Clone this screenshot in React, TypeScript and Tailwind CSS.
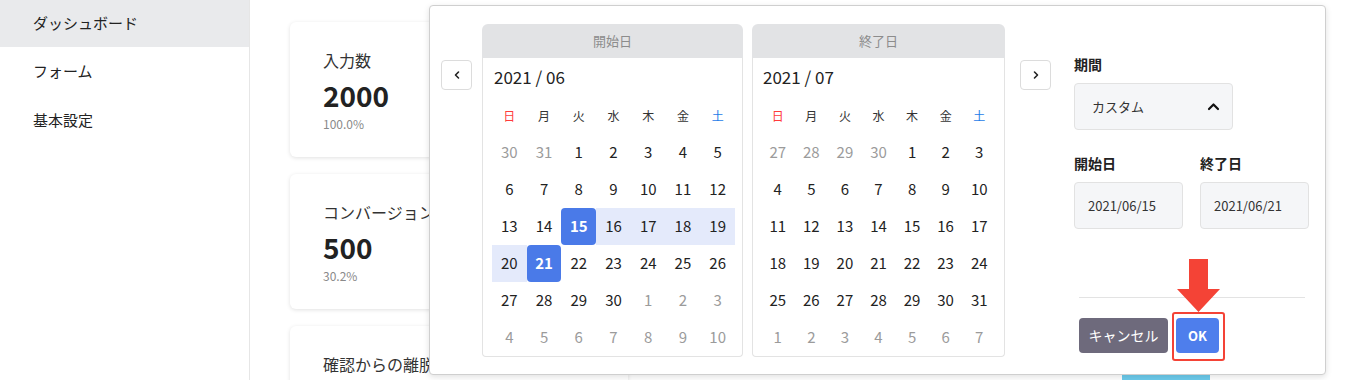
import React from "react";

const FONT = { fontFamily: '"Noto Sans CJK JP", "Noto Sans", sans-serif' };

type Cell = { d: number; muted?: boolean; sel?: boolean; range?: boolean };

const june: Cell[] = [
  { d: 30, muted: true },
  { d: 31, muted: true },
  ...Array.from({ length: 30 }, (_, i) => {
    const d = i + 1;
    return { d, sel: d === 15 || d === 21, range: d > 15 && d < 21 } as Cell;
  }),
  ...Array.from({ length: 10 }, (_, i) => ({ d: i + 1, muted: true })),
];

const july: Cell[] = [
  { d: 27, muted: true },
  { d: 28, muted: true },
  { d: 29, muted: true },
  { d: 30, muted: true },
  ...Array.from({ length: 31 }, (_, i) => ({ d: i + 1 })),
  ...Array.from({ length: 7 }, (_, i) => ({ d: i + 1, muted: true })),
];

const weekdays = ["日", "月", "火", "水", "木", "金", "土"];

function Calendar({
  title,
  month,
  cells,
  w,
  pl,
  pr,
}: {
  title: string;
  month: string;
  cells: Cell[];
  w: string;
  pl: string;
  pr: string;
}) {
  return (
    <div className={`${w} flex flex-col`}>
      <div className="h-[34px] bg-[#e2e3e5] rounded-t-[6px] flex items-center justify-center text-[13px] text-[#8c8c8c]">
        {title}
      </div>
      <div className={`border border-t-0 border-[#e3e3e3] rounded-b-[4px] ${pl} ${pr}`}>
        <div className="h-[39px] flex items-center ml-[2px] pb-[2px] text-[17px] text-[#222]">{month}</div>
        <div className="grid grid-cols-7">
          {weekdays.map((w, i) => (
            <div
              key={w}
              className={`h-[37px] flex items-center justify-center text-[12px] ${
                i === 0 ? "text-[#ff3b3b]" : i === 6 ? "text-[#1e7ce8]" : "text-[#333]"
              }`}
            >
              {w}
            </div>
          ))}
          {cells.map((c, i) => (
            <div
              key={i}
              className={`h-[37px] flex items-center justify-center text-[15px] ${
                c.sel
                  ? "bg-[#4a7ae8] text-white font-bold rounded-[4px]"
                  : c.range
                  ? "bg-[#e4eafb] text-[#222]"
                  : c.muted
                  ? "text-[#9b9b9b]"
                  : "text-[#222]"
              }`}
            >
              {c.d}
            </div>
          ))}
        </div>
      </div>
    </div>
  );
}

function NavButton({ dir }: { dir: "l" | "r" }) {
  return (
    <div className="mt-[36px] w-[31px] h-[30px] border border-[#dcdcdc] rounded-[4px] flex items-center justify-center shrink-0">
      <svg width="8" height="10" viewBox="0 0 8 10">
        <path
          d={dir === "l" ? "M5.5 2 L2.5 5 L5.5 8" : "M2.5 2 L5.5 5 L2.5 8"}
          fill="none"
          stroke="#222"
          strokeWidth="1.6"
          strokeLinecap="round"
          strokeLinejoin="round"
        />
      </svg>
    </div>
  );
}

function StatCard({ title, value, pct }: { title: string; value?: string; pct?: string }) {
  return (
    <div className="h-[135px] shrink-0 bg-white rounded-[6px] shadow-[0_1px_4px_rgba(0,0,0,0.12)] px-[33px] pt-[26px]">
      <div className="text-[16px] leading-[24px] text-[#333] whitespace-nowrap">{title}</div>
      {value && <div className="mt-[5px] text-[28px] leading-[36px] font-bold text-[#222]">{value}</div>}
      {pct && <div className="mt-[2px] text-[12px] leading-[18px] text-[#8a8a8a]">{pct}</div>}
    </div>
  );
}

export default function App() {
  return (
    <div className="relative flex h-[380px] w-[1366px] overflow-hidden bg-white" style={FONT}>
      <aside className="w-[250px] shrink-0 border-r border-[#e6e6e6] h-full">
        <div className="h-[47px] bg-[#e9eaec] flex items-center pl-[33px] text-[15px] text-[#222]">ダッシュボード</div>
        <div className="h-[49px] flex items-center pl-[33px] text-[15px] text-[#222]">フォーム</div>
        <div className="h-[48px] flex items-center pl-[33px] text-[15px] text-[#222]">基本設定</div>
      </aside>
      <main className="flex-1 flex pl-[40px] pt-[22px] gap-[40px]">
        <div className="w-[338px] flex flex-col gap-[17px]">
          <StatCard title="入力数" value="2000" pct="100.0%" />
          <StatCard title="コンバージョン数" value="500" pct="30.2%" />
          <StatCard title="確認からの離脱数" />
        </div>
        <div className="flex-1 flex items-end h-[480px] pl-[454px]">
          <div className="w-[88px] h-[128px] bg-[#6ccbec]" />
        </div>
      </main>

      {/* date range popover */}
      <div className="absolute left-[429px] top-[5px] w-[897px] h-[370px] bg-white border border-[#cfcfcf] rounded-[4px] shadow-[0_2px_6px_rgba(0,0,0,0.12)] flex items-start pl-[11px] pt-[18px]">
        <NavButton dir="l" />
        <div className="ml-[10px]">
          <Calendar title="開始日" month="2021 / 06" cells={june} w="w-[261px]" pl="pl-[9px]" pr="pr-[7px]" />
        </div>
        <div className="ml-[9px]">
          <Calendar title="終了日" month="2021 / 07" cells={july} w="w-[253px]" pl="pl-[8px]" pr="pr-[8px]" />
        </div>
        <div className="ml-[15px]">
          <NavButton dir="r" />
        </div>
        <div className="ml-[23px] w-[236px] flex flex-col">
          <div className="mt-[30px] text-[14px] leading-[20px] font-bold text-[#222]">期間</div>
          <div className="mt-[9px] w-[159px] h-[47px] bg-[#f5f6f8] border border-[#e2e2e2] rounded-[4px] flex items-center justify-between pl-[17px] pr-[12px]">
            <span className="text-[13px] text-[#333]">カスタム</span>
            <svg width="13" height="9" viewBox="0 0 13 9">
              <path d="M2 7 L6.5 2.5 L11 7" fill="none" stroke="#111" strokeWidth="2.2" strokeLinecap="round" strokeLinejoin="round" />
            </svg>
          </div>
          <div className="mt-[23px] flex gap-[17px]">
            <div className="w-[109px]">
              <div className="text-[14px] leading-[20px] font-bold text-[#222]">開始日</div>
              <div className="mt-[9px] h-[47px] bg-[#f5f6f8] border border-[#e2e2e2] rounded-[4px] flex items-center pl-[13px] text-[13px] text-[#333]">
                2021/06/15
              </div>
            </div>
            <div className="w-[109px]">
              <div className="text-[14px] leading-[20px] font-bold text-[#222]">終了日</div>
              <div className="mt-[9px] h-[47px] bg-[#f5f6f8] border border-[#e2e2e2] rounded-[4px] flex items-center pl-[13px] text-[13px] text-[#333]">
                2021/06/21
              </div>
            </div>
          </div>
          <div className="mt-[68px] ml-[5px] w-[226px] h-px bg-[#e3e3e3]" />
          <div className="mt-[20px] ml-[5px] flex">
            <div className="w-[89px] h-[35px] bg-[#6e6a7c] rounded-[4px] flex items-center justify-center text-[14px] text-white">
              キャンセル
            </div>
            <div className="relative ml-[8px]">
              <div className="w-[43px] h-[35px] bg-[#4e7eec] rounded-[4px] flex items-center justify-center text-[13px] font-bold text-white">
                OK
              </div>
              <div className="absolute left-[-4px] top-[-6px] w-[53px] h-[49px] border-2 border-[#f44336] rounded-[3px]" />
              <svg className="absolute left-[1px] top-[-59px]" width="43" height="53" viewBox="0 0 43 53">
                <polygon points="12,0 31,0 31,30 43,30 21.5,53 0,30 12,30" fill="#f44336" />
              </svg>
            </div>
          </div>
        </div>
      </div>
    </div>
  );
}
